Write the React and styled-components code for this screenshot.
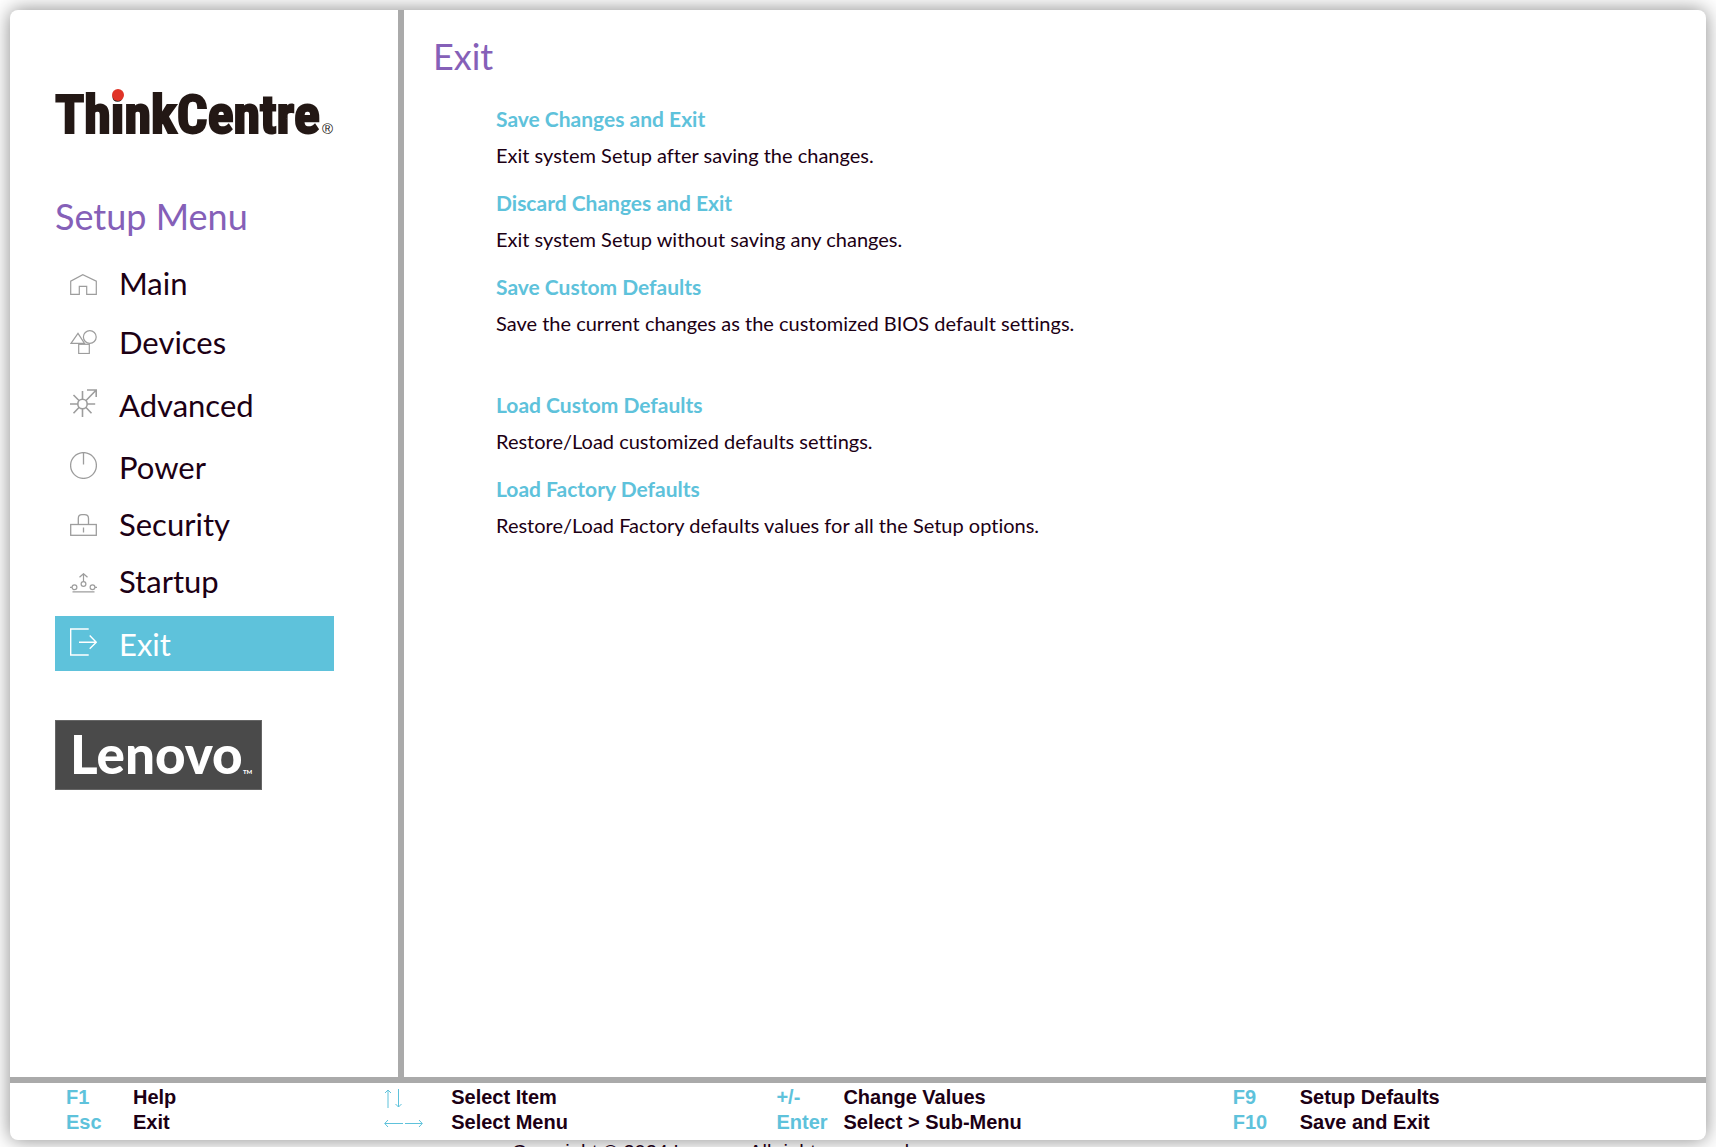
import React from "react";
import styled, { createGlobalStyle } from "styled-components";

const GlobalStyle = createGlobalStyle`
  * { box-sizing: border-box; }
  body {
    margin: 0;
    overflow: hidden;
    background: #fff;
    color: #1c0014;
    font-family: Lato, "Open Sans", sans-serif;
    font-variant-ligatures: none;
  }
  h1, h2, p, ul, dl, dd { margin: 0; padding: 0; }
  ul { list-style: none; }
`;

const Page = styled.div`
  height: 100vh;
  padding: 10px 10px 0;
`;

const Card = styled.div`
  display: flex;
  flex-direction: column;
  height: calc(100% - 7px);
  background: #fff;
  border-radius: 8px;
  box-shadow: 0 0 20px #888;
`;

const Body = styled.div`
  flex: 1;
  display: flex;
  min-height: 0;
`;

const Sidebar = styled.aside`
  flex: none;
  width: 394px;
  padding: 54px 64px 0 45px;
  border-right: 6px solid #aaa;
`;

const Logo = styled.svg`
  display: block;
  overflow: visible;
`;

const ThinkText = styled.text`
  font-family: "Roboto Condensed", "Liberation Sans", sans-serif;
  font-size: 54px;
  font-weight: 700;
  fill: #231815;
  stroke: #231815;
  stroke-width: 2px;
`;

const MarkText = styled.text`
  font-family: "Liberation Sans", Arial, sans-serif;
  font-size: 15px;
  fill: #231815;
`;

const Heading = styled.h2`
  margin-top: 56px;
  font-size: 36px;
  line-height: 44px;
  font-weight: 400;
  color: #8560b8;
`;

const NavList = styled.ul`
  display: flex;
  flex-direction: column;
  gap: 8px;
  margin-top: 23px;
`;

const NavLink = styled.a`
  display: flex;
  align-items: baseline;
  gap: 22px;
  padding: 12px 15px 13px;
  font-size: 31px;
  line-height: 20px;
  text-decoration: none;
  color: ${(p) => (p.$active ? "#fff" : "#1c0014")};
  background: ${(p) => (p.$active ? "#5ec2db" : "transparent")};
`;

const NavIcon = styled.svg`
  flex: none;
  margin-bottom: 2px;
  fill: none;
  stroke: ${(p) => (p.$active ? "#fff" : "#9d9d9d")};
`;

const Brand = styled.div`
  display: flex;
  width: 207px;
  margin-top: 49px;
  background: #4a4a4a;
  border: 1px solid #666;
`;

const BrandText = styled.text`
  font-family: Lato, sans-serif;
  font-size: ${(p) => p.$size}px;
  font-weight: 900;
  fill: #fff;
`;

const Content = styled.main`
  flex: 1;
  padding: 24px 29px;
`;

const Title = styled.h1`
  font-size: 36px;
  line-height: 44px;
  font-weight: 400;
  color: #8560b8;
`;

const Actions = styled.div`
  display: flex;
  flex-direction: column;
  gap: 19px;
  margin-top: 26px;
  padding-left: 63px;
`;

const ActionItem = styled.section`
  display: flex;
  flex-direction: column;
  align-items: flex-start;
  gap: 7px;
  margin-top: ${(p) => (p.$apart ? 34 : 0)}px;
`;

const ActionButton = styled.button`
  padding: 0;
  border: 0;
  background: none;
  font-family: inherit;
  font-size: 21px;
  line-height: 30px;
  font-weight: 700;
  color: #5ec2db;
  cursor: pointer;
`;

const ActionNote = styled.p`
  font-size: 20px;
  line-height: 28px;
`;

const Footer = styled.footer`
  flex: none;
  display: grid;
  grid-template-columns: 318fr 392fr 456fr 473fr;
  padding: 2px 0 5px 56px;
  border-top: 6px solid #aaa;
  font-family: "Liberation Sans", Arial, sans-serif;
  font-size: 20px;
  line-height: 25px;
  font-weight: 700;
`;

const KeyList = styled.dl`
  display: grid;
  grid-template-columns: 67px 1fr;
`;

const Key = styled.dt`
  display: flex;
  align-items: center;
  color: #5ec2db;
`;

const Arrows = styled.svg`
  fill: none;
  stroke: #5ec2db;
`;

const Copyright = styled.p`
  padding-left: 502px;
  font-family: "Liberation Sans", Arial, sans-serif;
  font-size: 20px;
  line-height: 24px;
`;

const NAV = [
  { label: "Main", height: 21, art: <path d="M.7 20.3V7.2L12.8.7l13.5 6.5v13.1h-9.6v-8H9.3v8z" /> },
  {
    label: "Devices",
    height: 24,
    art: (
      <>
        <path d="M1 13.3 8 3.3l6.5 10z" />
        <circle cx="19.8" cy="7" r="6.4" />
        <rect x="8.7" y="14.3" width="10.6" height="9.2" />
      </>
    ),
  },
  {
    label: "Advanced",
    height: 28,
    weight: 1.6,
    art: (
      <>
        <circle cx="12.5" cy="15" r="4.7" />
        <path d="M12.5 2v8.3M12.5 19.7V28M0 15h7.8M17.2 15h8M3.5 6l5.7 5.7M3.5 24.3l5.7-6M15.8 18.3l5.7 6M15.8 11.7 26 1.3M17 1h9.2v7" />
      </>
    ),
  },
  {
    label: "Power",
    height: 27,
    weight: 1.3,
    art: (
      <>
        <circle cx="13.5" cy="13.5" r="12.9" />
        <path d="M13.5.5v12" />
      </>
    ),
  },
  {
    label: "Security",
    height: 22,
    weight: 1.3,
    art: (
      <>
        <rect x=".7" y="10.5" width="25.6" height="10.8" />
        <path d="M8.3 10.5V4.5Q8.3.7 12 .7h2.5q4 0 4 3.8V10.5M13.5 13.5v5" />
      </>
    ),
  },
  {
    label: "Startup",
    height: 20,
    weight: 1.2,
    art: (
      <>
        <circle cx="4.5" cy="14.3" r="2.4" />
        <circle cx="22.5" cy="14.3" r="2.4" />
        <circle cx="13.5" cy="11" r="2.4" />
        <path d="M0 14.3h2M25 14.3h2M2.5 18.8h22M13.5 8.5V.7M9.5 4.3l4-3.6 4 3.6" />
      </>
    ),
  },
  {
    label: "Exit",
    height: 28,
    weight: 1.4,
    active: true,
    art: <path d="M18.7 1H.7v26h18M9 14.2h17.3M19.7 7.5l6.6 6.7-6.6 6.6" />,
  },
];

const ACTIONS = [
  { title: "Save Changes and Exit", note: "Exit system Setup after saving the changes." },
  { title: "Discard Changes and Exit", note: "Exit system Setup without saving any changes." },
  { title: "Save Custom Defaults", note: "Save the current changes as the customized BIOS default settings." },
  { title: "Load Custom Defaults", note: "Restore/Load customized defaults settings.", apart: true },
  { title: "Load Factory Defaults", note: "Restore/Load Factory defaults values for all the Setup options." },
];

const UpDown = () => (
  <Arrows width="20" height="20" aria-label="Up and down arrows">
    <path d="M4 20V2M1 5l3-3 3 3M14.5 1v18M11.5 16l3 3 3-3" />
  </Arrows>
);

const LeftRight = () => (
  <Arrows width="40" height="10" aria-label="Left and right arrows">
    <path d="M19 5.5H1M4 2 .7 5.5 4 9M21 5.5h17M35 2l3.3 3.5L35 9" />
  </Arrows>
);

const KEYS = [
  [["F1", "Help"], ["Esc", "Exit"]],
  [[<UpDown />, "Select Item"], [<LeftRight />, "Select Menu"]],
  [["+/-", "Change Values"], ["Enter", "Select > Sub-Menu"]],
  [["F9", "Setup Defaults"], ["F10", "Save and Exit"]],
];

export default function App() {
  return (
    <>
      <GlobalStyle />
      <Page>
        <Card>
          <Body>
            <Sidebar>
              <Logo width="280" height="74" role="img" aria-label="ThinkCentre">
                <ThinkText x="0" y="69">ThinkCentre</ThinkText>
                <circle cx="63" cy="31" r="6" fill="#e03428" />
                <MarkText x="267" y="70">®</MarkText>
              </Logo>
              <Heading>Setup Menu</Heading>
              <nav>
                <NavList>
                  {NAV.map((n) => (
                    <li key={n.label}>
                      <NavLink href={"#" + n.label.toLowerCase()} $active={n.active}>
                        <NavIcon width="27" height={n.height} strokeWidth={n.weight || 1.2} $active={n.active} aria-hidden="true">
                          {n.art}
                        </NavIcon>
                        {n.label}
                      </NavLink>
                    </li>
                  ))}
                </NavList>
              </nav>
              <Brand>
                <Logo width="205" height="68" role="img" aria-label="Lenovo">
                  <BrandText $size={53} x="14" y="53">Lenovo</BrandText>
                  <BrandText $size={6} x="187" y="53">TM</BrandText>
                </Logo>
              </Brand>
            </Sidebar>
            <Content>
              <Title>Exit</Title>
              <Actions>
                {ACTIONS.map((a) => (
                  <ActionItem key={a.title} $apart={a.apart}>
                    <ActionButton type="button">{a.title}</ActionButton>
                    <ActionNote>{a.note}</ActionNote>
                  </ActionItem>
                ))}
              </Actions>
            </Content>
          </Body>
          <Footer>
            {KEYS.map((group, i) => (
              <KeyList key={i}>
                {group.map(([key, label]) => (
                  <React.Fragment key={label}>
                    <Key>{key}</Key>
                    <dd>{label}</dd>
                  </React.Fragment>
                ))}
              </KeyList>
            ))}
          </Footer>
        </Card>
        <Copyright>Copyright © 2024 Lenovo. All rights reserved.</Copyright>
      </Page>
    </>
  );
}
